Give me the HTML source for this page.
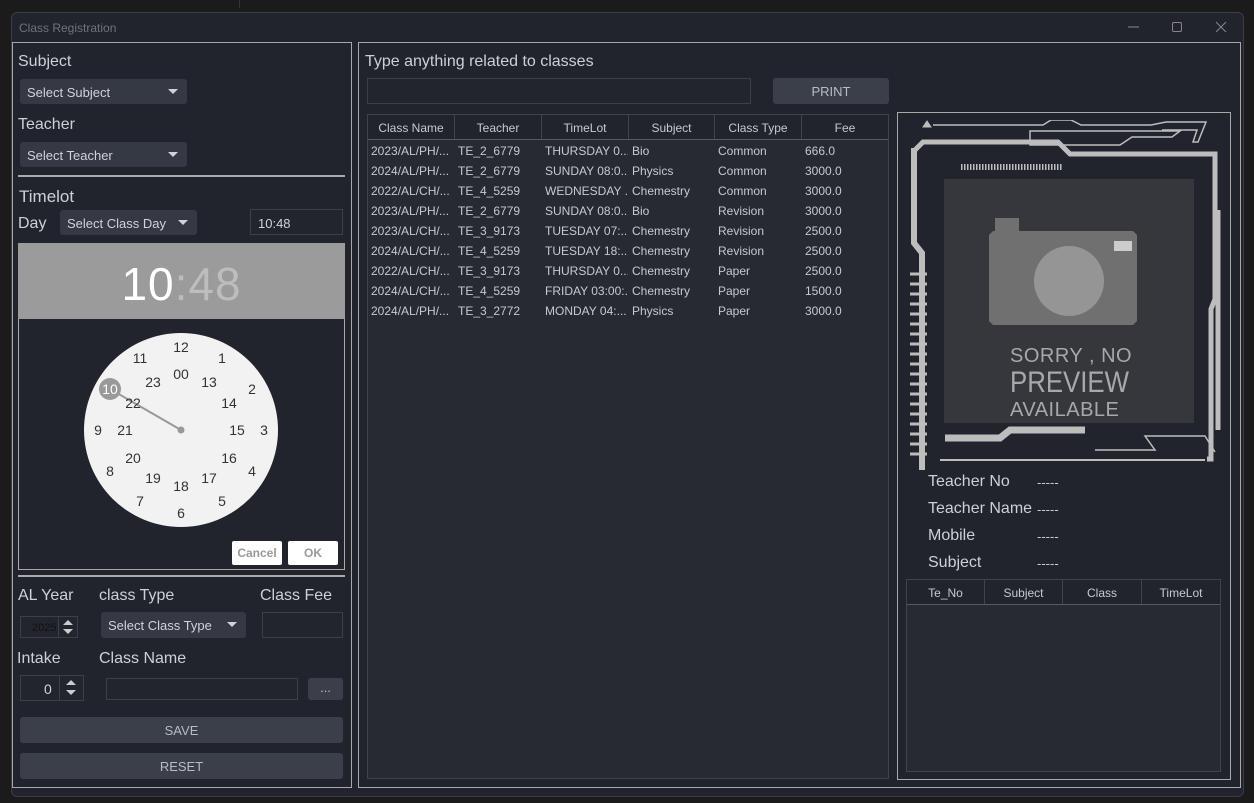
<!DOCTYPE html>
<html><head><meta charset="utf-8"><style>
*{box-sizing:border-box;margin:0;padding:0}
body{width:1254px;height:803px;background:#1b1b1c;font-family:"Liberation Sans",sans-serif;position:relative;overflow:hidden;color:#c8ccd2}
.a{position:absolute}
.win{left:11px;top:12px;width:1233px;height:785px;background:#21242c;border:1px solid #3a3d44;border-radius:6px}
.box{border:1px solid #a8a8a8}
.lbl{font-size:16px;color:#cdd1d6}
.cb{background:#353944;border-radius:3px;font-size:13px;color:#d0d3d8;padding-left:7px;line-height:27px}
.cb:after{content:"";position:absolute;right:9px;top:10px;border:5px solid transparent;border-top:5px solid #d0d3d8}
.inp{background:#22252d;border:1px solid #3b3f48;font-size:13px;color:#d0d3d8}
.btn{background:#3b3f49;border-radius:3px;font-size:13px;color:#b8bcc3;text-align:center}
table{border-collapse:collapse;font-size:12px;color:#c6cad0}
td{height:20px;padding-left:4px;padding-top:2px;white-space:nowrap;overflow:hidden}
.hd{display:flex;border-bottom:1px solid #555a63;font-size:12px;color:#c6cad0}
.hd div{border-right:1px solid #3f434c;text-align:center;line-height:26px}
.cn{position:absolute;font-size:14px;color:#333;transform:translate(-50%,-50%)}
.sp{position:absolute;width:0;height:0;border:5px solid transparent}
</style></head><body>
<div class="a" style="left:0;top:0;width:240px;height:8px;border-right:1px solid #333"></div>
<div class="a win"></div>
<div class="a" style="left:19px;top:21px;font-size:12px;color:#6f737a">Class Registration</div>
<svg class="a" style="left:1120px;top:18px" width="120" height="20"><line x1="8" y1="9" x2="19" y2="9" stroke="#888" /><rect x="52.5" y="4.5" width="9" height="9" rx="1.5" fill="none" stroke="#888"/><path d="M96 4l10 10M106 4l-10 10" stroke="#888"/></svg>

<!-- left panel -->
<div class="a box" style="left:12px;top:42px;width:340px;height:746px"></div>
<div class="a lbl" style="left:18px;top:53px">Subject</div>
<div class="a cb" style="left:20px;top:79px;width:167px;height:25px">Select Subject</div>
<div class="a lbl" style="left:18px;top:116px">Teacher</div>
<div class="a cb" style="left:20px;top:142px;width:167px;height:25px">Select Teacher</div>
<div class="a" style="left:18px;top:175px;width:327px;height:2px;background:#aaa"></div>
<div class="a lbl" style="left:19px;top:187px;font-size:17px">Timelot</div>
<div class="a lbl" style="left:18px;top:215px">Day</div>
<div class="a cb" style="left:60px;top:210px;width:137px;height:25px">Select Class Day</div>
<div class="a inp" style="left:250px;top:209px;width:93px;height:26px;padding:6px 7px">10:48</div>
<div class="a" style="left:18px;top:243px;width:327px;height:76px;background:#9b9b9b;text-align:center;font-size:46px;line-height:82px;color:#fff;letter-spacing:1px">10<span style="color:#bdbdbd">:48</span></div>
<div class="a" style="left:18px;top:319px;width:327px;height:251px;border:1px solid #aaa;border-top:none"></div>
<div class="a" style="left:84px;top:333px;width:194px;height:194px;border-radius:50%;background:#f2f2f2"></div>
<svg class="a" style="left:84px;top:333px" width="194" height="194"><line x1="97" y1="97" x2="26" y2="56" stroke="#999" stroke-width="2"/><circle cx="97" cy="97" r="3.5" fill="#999"/><circle cx="26" cy="56" r="11" fill="#999"/></svg>
<div class="cn" style="left:181px;top:347px">12</div><div class="cn" style="left:222px;top:358px">1</div><div class="cn" style="left:252px;top:389px">2</div><div class="cn" style="left:264px;top:430px">3</div><div class="cn" style="left:252px;top:471px">4</div><div class="cn" style="left:222px;top:501px">5</div><div class="cn" style="left:181px;top:513px">6</div><div class="cn" style="left:140px;top:501px">7</div><div class="cn" style="left:110px;top:471px">8</div><div class="cn" style="left:98px;top:430px">9</div><div class="cn" style="left:110px;top:389px;color:#fff">10</div><div class="cn" style="left:140px;top:358px">11</div>
<div class="cn" style="left:181px;top:374px">00</div><div class="cn" style="left:209px;top:382px">13</div><div class="cn" style="left:229px;top:403px">14</div><div class="cn" style="left:237px;top:430px">15</div><div class="cn" style="left:229px;top:458px">16</div><div class="cn" style="left:209px;top:478px">17</div><div class="cn" style="left:181px;top:486px">18</div><div class="cn" style="left:153px;top:478px">19</div><div class="cn" style="left:133px;top:458px">20</div><div class="cn" style="left:125px;top:430px">21</div><div class="cn" style="left:133px;top:403px">22</div><div class="cn" style="left:153px;top:382px">23</div>
<div class="a" style="left:232px;top:541px;width:50px;height:24px;background:#fff;border-radius:2px;font-size:12px;font-weight:bold;color:#999;text-align:center;line-height:25px">Cancel</div>
<div class="a" style="left:288px;top:541px;width:50px;height:24px;background:#fff;border-radius:2px;font-size:12px;font-weight:bold;color:#999;text-align:center;line-height:25px">OK</div>
<div class="a" style="left:18px;top:575px;width:327px;height:2px;background:#aaa"></div>
<div class="a lbl" style="left:18px;top:587px">AL Year</div>
<div class="a lbl" style="left:99px;top:587px">class Type</div>
<div class="a lbl" style="left:260px;top:587px">Class Fee</div>
<div class="a inp" style="left:20px;top:616px;width:58px;height:22px;font-size:11px;color:#111;padding:5px 0 0 11px">2025</div>
<div class="a" style="left:58px;top:616px;width:1px;height:22px;background:#3b3f48"></div>
<div class="sp" style="left:63px;top:615px;border-bottom:5px solid #ccc"></div>
<div class="sp" style="left:63px;top:629px;border-top:5px solid #ccc"></div>
<div class="a cb" style="left:101px;top:612px;width:145px;height:26px">Select Class Type</div>
<div class="a inp" style="left:262px;top:612px;width:81px;height:26px"></div>
<div class="a lbl" style="left:17px;top:650px">Intake</div>
<div class="a lbl" style="left:99px;top:650px">Class Name</div>
<div class="a inp" style="left:20px;top:675px;width:64px;height:26px;padding:5px 0 0 23px;font-size:14px">0</div>
<div class="a" style="left:59px;top:675px;width:1px;height:26px;background:#3b3f48"></div>
<div class="sp" style="left:66px;top:675px;border-bottom:5px solid #ccc"></div>
<div class="sp" style="left:66px;top:690px;border-top:5px solid #ccc"></div>
<div class="a inp" style="left:106px;top:678px;width:192px;height:22px"></div>
<div class="a btn" style="left:308px;top:678px;width:35px;height:22px;line-height:20px">...</div>
<div class="a btn" style="left:20px;top:717px;width:323px;height:26px;line-height:28px">SAVE</div>
<div class="a btn" style="left:20px;top:753px;width:323px;height:26px;line-height:28px">RESET</div>

<!-- middle -->
<div class="a box" style="left:358px;top:42px;width:883px;height:746px"></div>
<div class="a lbl" style="left:365px;top:53px">Type anything related to classes</div>
<div class="a inp" style="left:367px;top:78px;width:384px;height:26px"></div>
<div class="a btn" style="left:773px;top:78px;width:116px;height:26px;line-height:28px">PRINT</div>
<div class="a" style="left:367px;top:114px;width:522px;height:665px;border:1px solid #3f434c;background:#272a33"></div>
<div class="a hd" style="left:368px;top:115px;width:520px;height:25px;background:#21242c"><div style="width:87px">Class Name</div><div style="width:87px">Teacher</div><div style="width:87px">TimeLot</div><div style="width:86px">Subject</div><div style="width:87px">Class Type</div><div style="width:86px;border:none">Fee</div></div>
<table class="a" style="left:367px;top:140px;table-layout:fixed;width:520px">
<colgroup><col style="width:87px"><col style="width:87px"><col style="width:87px"><col style="width:86px"><col style="width:87px"><col style="width:86px"></colgroup>
<tr><td>2023/AL/PH/...</td><td>TE_2_6779</td><td>THURSDAY 0...</td><td>Bio</td><td>Common</td><td>666.0</td></tr>
<tr><td>2024/AL/PH/...</td><td>TE_2_6779</td><td>SUNDAY 08:0...</td><td>Physics</td><td>Common</td><td>3000.0</td></tr>
<tr><td>2022/AL/CH/...</td><td>TE_4_5259</td><td>WEDNESDAY ...</td><td>Chemestry</td><td>Common</td><td>3000.0</td></tr>
<tr><td>2023/AL/PH/...</td><td>TE_2_6779</td><td>SUNDAY 08:0...</td><td>Bio</td><td>Revision</td><td>3000.0</td></tr>
<tr><td>2023/AL/CH/...</td><td>TE_3_9173</td><td>TUESDAY 07:...</td><td>Chemestry</td><td>Revision</td><td>2500.0</td></tr>
<tr><td>2024/AL/CH/...</td><td>TE_4_5259</td><td>TUESDAY 18:...</td><td>Chemestry</td><td>Revision</td><td>2500.0</td></tr>
<tr><td>2022/AL/CH/...</td><td>TE_3_9173</td><td>THURSDAY 0...</td><td>Chemestry</td><td>Paper</td><td>2500.0</td></tr>
<tr><td>2024/AL/CH/...</td><td>TE_4_5259</td><td>FRIDAY 03:00:...</td><td>Chemestry</td><td>Paper</td><td>1500.0</td></tr>
<tr><td>2024/AL/PH/...</td><td>TE_3_2772</td><td>MONDAY 04:...</td><td>Physics</td><td>Paper</td><td>3000.0</td></tr>
</table>

<!-- right -->
<div class="a box" style="left:897px;top:112px;width:334px;height:668px"></div>
<svg class="a" style="left:905px;top:120px" width="320" height="350" fill="none" stroke="#bdbdbd">
<rect x="39" y="59" width="250" height="244" fill="#35373c" stroke="none"/>
<path d="M18 7l4-6 4 6z" fill="#bdbdbd"/>
<path d="M28 5h110l8-5h20l10 5h70l15-3h40l-8 20h-5l4-12h-35" stroke-width="1.5"/>
<path d="M125 11h150l-8 6h-40l-12 8h-90z" stroke-width="1.5"/>
<path d="M10 30l8-8h135l12 12h145v145l-4 10v150h-4" stroke-width="5"/>
<path d="M9 28v95l8 10v220" stroke-width="6"/>
<path d="M56 47h102" stroke-width="6" stroke-dasharray="1.5 1.5"/>
<g stroke-width="3">
<path d="M5 42h17M5 52h17M5 62h17M5 72h17M5 82h17M5 92h17M5 102h17M5 112h17M5 122h17M5 132h17M5 142h17M5 152h17M5 162h17M5 172h17M5 182h17M5 192h17M5 202h17M5 212h17M5 222h17" transform="translate(0 112)"/>
</g>
<path d="M40 318h55l10-8h75" stroke-width="7"/>
<path d="M190 330h60l-10-14h60l10 16" stroke-width="1.5"/>
<path d="M35 340h265" stroke-width="2"/>
<path d="M313 90v220" stroke-width="5"/>
</svg>
<svg class="a" style="left:987px;top:217px" width="160" height="112"><path d="M6 14h2v-13h24v13h114l4 4v86l-4 4h-140l-4-4v-86z" fill="#707070"/><circle cx="82" cy="64" r="35" fill="#959595"/><rect x="127" y="24" width="18" height="10" fill="#ccc"/></svg>
<div class="a" style="left:1010px;top:345px;font-size:20px;color:#a8a8a8;letter-spacing:0.5px">SORRY , NO</div>
<div class="a" style="left:1010px;top:366px;font-size:30px;color:#a8a8a8;transform:scaleX(0.86);transform-origin:left">PREVIEW</div>
<div class="a" style="left:1010px;top:399px;font-size:20px;color:#a8a8a8;letter-spacing:0.5px">AVAILABLE</div>
<div class="a lbl" style="left:928px;top:473px">Teacher No</div>
<div class="a lbl" style="left:928px;top:500px">Teacher Name</div>
<div class="a lbl" style="left:928px;top:527px">Mobile</div>
<div class="a lbl" style="left:928px;top:554px">Subject</div>
<div class="a" style="left:1037px;top:475px;font-size:13px">-----</div>
<div class="a" style="left:1037px;top:502px;font-size:13px">-----</div>
<div class="a" style="left:1037px;top:529px;font-size:13px">-----</div>
<div class="a" style="left:1037px;top:556px;font-size:13px">-----</div>
<div class="a" style="left:906px;top:579px;width:315px;height:193px;border:1px solid #3f434c;background:#272a33"></div>
<div class="a hd" style="left:907px;top:580px;width:313px;height:25px;background:#21242c"><div style="width:78px">Te_No</div><div style="width:78px">Subject</div><div style="width:79px">Class</div><div style="width:78px;border:none">TimeLot</div></div>
</body></html>
